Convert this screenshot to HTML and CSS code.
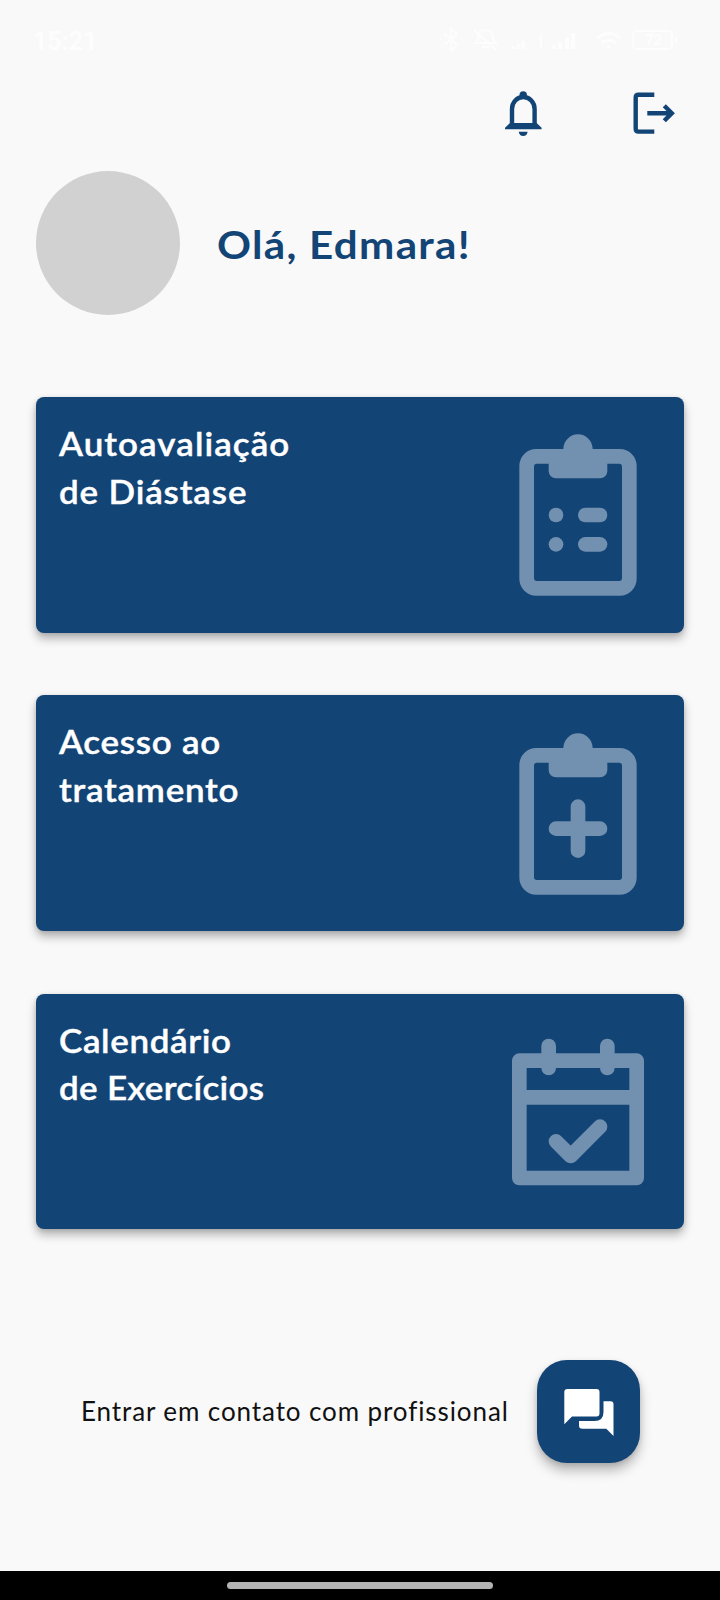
FILE: index.html
```html
<!DOCTYPE html>
<html lang="pt-BR">
<head>
<meta charset="utf-8">
<title>Início</title>
<link rel="stylesheet" href="styles.css">
</head>
<body>
<div class="screen">
  <div class="status">
    <span class="clock">15:21</span>
    <svg class="status-icons" width="244" height="26" viewBox="436 26 244 26" fill="none" stroke="#fff" stroke-width="2">
      <path d="M444 33l13 12-6 6V29l6 5-13 11M440 39h1M460 39h1"/>
      <path d="M476 43c3-2 2-6 3-9 2-5 12-5 14 1 0 4 0 6 3 8zM482 47h7M474 30l22 20"/>
      <path d="M513 49v-3M518 49v-5M523 49v-8" stroke-width="3"/>
      <path d="M541 34v15"/>
      <path d="M554 49v-4M560 49v-7M567 49v-12M573 49v-16" stroke-width="4"/>
      <path d="M598 38c7-6 15-6 22 0M602 43c5-4 9-4 14 0M607 47h4" stroke-width="3"/>
      <rect x="633" y="31" width="39" height="18" rx="4"/>
      <path d="M676 37v6" stroke-width="3"/>
      <text class="battery" x="645" y="45">72</text>
    </svg>
  </div>

  <header class="actions">
    <svg class="bell" width="37" height="46" viewBox="505 91 37 46">
      <circle cx="523.2" cy="95" r="3.7" fill="#134476"/>
      <path d="M512 128V109a11.3 12 0 0 1 22.6 0v19" fill="none" stroke="#134476" stroke-width="4.400"/>
      <path d="M505 129.3v-1.5l5-4.8h26.6l5 4.8v1.5zM518.7 131.8h8.9q-.6 4.2-4.4 4.2t-4.5-4.2z" fill="#134476"/>
    </svg>
    <svg class="logout" width="42" height="43" viewBox="633 92 42 43" fill="none" stroke="#134476" stroke-width="4.400">
      <path d="M654.3 94.7h-15.800q-2.800 0-2.800 2.800v31.300q0 2.800 2.800 2.800h15.800M647.300 113.200h24.500M664.300 105.700l7.500 7.500-7.500 7.500"/>
    </svg>
  </header>

  <section class="profile">
    <div class="avatar"></div>
    <h1 class="greeting">Olá, Edmara!</h1>
  </section>

  <main class="cards">
    <article class="card">
      <h2 class="label"><span class="t1">Autoavaliação</span><span class="t2">de Diástase</span></h2>
      <svg class="icon" viewBox="0 0 24 24">
        <path fill-rule="evenodd" d="M10 3a2 2 0 0 1 4 0h3.7A2.3 2.3 0 0 1 20 5.3v15.4a2.3 2.3 0 0 1-2.3 2.3H6.3A2.3 2.3 0 0 1 4 20.700V5.300A2.3 2.3 0 0 1 6.3 3zM8 5H6.400a.4.4 0 0 0-.4.4v15.200a.4.4 0 0 0 .4.4h11.200a.4.4 0 0 0 .4-.4V5.400a.4.4 0 0 0-.4-.4H16v1a1 1 0 0 1-1 1H9a1 1 0 0 1-1-1z"/>
        <circle cx="9" cy="12" r="1"/><circle cx="9" cy="16" r="1"/>
        <rect x="12" y="11" width="4" height="2" rx="1"/><rect x="12" y="15" width="4" height="2" rx="1"/>
      </svg>
    </article>
    <article class="card">
      <h2 class="label"><span class="t3">Acesso ao</span><span class="t4">tratamento</span></h2>
      <svg class="icon" viewBox="0 0 24 24">
        <path fill-rule="evenodd" d="M10 3a2 2 0 0 1 4 0h3.7A2.3 2.3 0 0 1 20 5.3v15.4a2.3 2.3 0 0 1-2.3 2.3H6.3A2.3 2.3 0 0 1 4 20.700V5.300A2.3 2.3 0 0 1 6.3 3zM8 5H6.400a.4.4 0 0 0-.4.4v15.200a.4.4 0 0 0 .4.4h11.200a.4.4 0 0 0 .4-.4V5.400a.4.4 0 0 0-.4-.4H16v1a1 1 0 0 1-1 1H9a1 1 0 0 1-1-1z"/>
        <path d="M11 13v-2a1 1 0 0 1 2 0v2h2a1 1 0 0 1 0 2h-2v2a1 1 0 0 1-2 0v-2H9a1 1 0 0 1 0-2z"/>
      </svg>
    </article>
    <article class="card">
      <h2 class="label"><span class="t5">Calendário</span><span class="t6">de Exercícios</span></h2>
      <svg class="icon" viewBox="0 0 24 24">
        <path fill-rule="evenodd" d="M7 4V3a1 1 0 0 1 2 0v1h6V3a1 1 0 0 1 2 0v1h3a1 1 0 0 1 1 1v16a1 1 0 0 1-1 1H4a1 1 0 0 1-1-1V5a1 1 0 0 1 1-1zM7 6H5v3h14V6h-2a1 1 0 0 1-2 0H9a1 1 0 0 1-2 0zM5 11v9h14v-9z"/>
        <path d="M9 16l2 2 4-4" fill="none" stroke="#7290af" stroke-width="2" stroke-linecap="round" stroke-linejoin="round"/>
      </svg>
    </article>
  </main>

  <section class="contact">
    <span class="contact-text">Entrar em contato com profissional</span>
    <button class="fab" aria-label="Chat">
      <svg width="50" height="48" viewBox="563.500 1389 50 48" fill="#fff">
        <path d="M567 1389h29q3 0 3 3v21.500q0 3-3 3h-24.500l-7.700 7.800V1392q0-3 3.200-3z"/>
        <path d="M603 1401.300h7q3 0 3 3V1436l-7.200-7.200h-24q-3.300 0-3.300-3.300V1421H594q9 0 9-9z"/>
      </svg>
    </button>
  </section>

  <footer class="navbar"><div class="handle"></div></footer>
</div>
</body>
</html>
```
FILE: styles.css
```css
* { box-sizing: border-box; }
body { margin: 0; background: #f9f9f9; font-family: Lato, "Open Sans", sans-serif; }
.screen { width: 720px; height: 1600px; display: flex; flex-direction: column; overflow: hidden; }
.status { height: 91px; flex: none; padding: 26px 40px 0 33px; display: flex; justify-content: space-between; color: #fff; }
.clock { font: 700 25px/32px Roboto, sans-serif; opacity: .8; }
.status-icons { opacity: .8; }
.battery { font: 700 15px Roboto, sans-serif; fill: #fff; stroke: none; }
.actions { height: 80px; flex: none; display: flex; justify-content: flex-end; gap: 91px; padding-right: 45px; }
.logout { margin-top: 1px; }
.profile { height: 144px; flex: none; display: flex; align-items: center; gap: 37px; padding-left: 36px; }
.avatar { width: 144px; height: 144px; border-radius: 50%; background: #d1d1d1; }
.greeting { margin: 1px 0 0; font-size: 39px; line-height: 48px; font-weight: 700; color: #134476; letter-spacing: 1.200px; transform: scaleX(1.08); transform-origin: left; white-space: nowrap; }
.cards { flex: none; padding: 82px 36px 0; display: flex; flex-direction: column; gap: 62.800px; }
.card { height: 235.600px; padding: 0 18px 0 22.500px; display: flex; justify-content: space-between; align-items: center; background: #134476; border-radius: 8px; box-shadow: 0 6px 10px rgba(0, 0, 0, .27), 0 1px 5px rgba(0, 0, 0, .12); }
.label { margin: 0; padding-top: 23px; align-self: flex-start; display: flex; flex-direction: column; font-size: 33px; line-height: 47.700px; font-weight: 600; color: #fff; white-space: nowrap; -webkit-text-stroke: .4px #fff; transform: scaleX(1.06); transform-origin: left; }
.icon { width: 176px; height: 176px; margin-top: 1px; fill: #7290af; }
.t1 { letter-spacing: 1px; }
.t2 { letter-spacing: .800px; }
.t3 { letter-spacing: .700px; }
.t4 { letter-spacing: .700px; }
.t5 { letter-spacing: .600px; }
.t6 { letter-spacing: .300px; }
.contact { height: 103px; flex: none; margin-top: 130.400px; padding: 0 80px 0 81px; display: flex; justify-content: space-between; align-items: center; }
.contact-text { font-size: 26px; line-height: 32px; color: #111; letter-spacing: .9px; white-space: nowrap; }
.fab { width: 103px; height: 103px; padding: 3px 0 0; border: 0; border-radius: 30px; background: #134476; display: flex; align-items: center; justify-content: center; box-shadow: 0 8px 12px rgba(0, 0, 0, .25), 0 2px 5px rgba(0, 0, 0, .12); }
.navbar { height: 29.500px; flex: none; margin-top: auto; padding-top: 11.500px; background: #000; display: flex; justify-content: center; }
.handle { width: 266px; height: 7px; border-radius: 4px; background: #b3b3b3; }
```
